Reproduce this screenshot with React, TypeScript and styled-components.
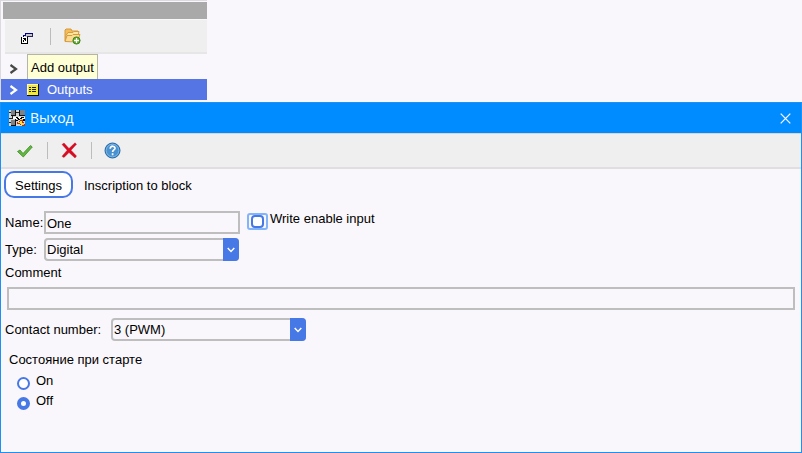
import React, { useState } from "react";
import styled, { createGlobalStyle } from "styled-components";

const accent = "#4678e6";
const line = "#bebebe";

const GlobalStyle = createGlobalStyle`
  * { box-sizing: border-box; }
  body {
    margin: 0;
    background: #f9f7fb;
    color: #000;
    font-family: "Liberation Sans", Arial, sans-serif;
    font-size: 13px;
    line-height: 16px;
  }
  button, input, select { font: inherit; color: inherit; }
`;

const Page = styled.div`
  display: flex;
  flex-direction: column;
  min-height: 100vh;
`;

const SidePanel = styled.aside`
  width: 207px;
  margin-bottom: 2px;
  border-top: 1px solid #dcdade;
  border-left: 1px solid #dcdade;
`;

const PanelHeader = styled.div`
  height: 17px;
  margin: 1px 0 1px 2px;
  background: #a9a9a9;
`;

const PanelTools = styled.div`
  display: flex;
  align-items: center;
  height: 34px;
  margin-left: 4px;
  padding-left: 10px;
  background: #efefef;
  border-bottom: 2px solid #e6e6e6;
`;

const ToolButton = styled.button<{ $width: number }>`
  display: grid;
  place-items: center;
  width: ${(p) => p.$width}px;
  height: 24px;
  padding: 0;
  border: 0;
  background: none;
`;

const Separator = styled.span<{ $gap: number }>`
  width: 1px;
  height: 17px;
  margin: 0 ${(p) => p.$gap}px;
  background: #bcbcbc;
`;

const TreeRow = styled.div<{ $selected?: boolean }>`
  display: flex;
  align-items: center;
  position: relative;
  height: ${(p) => (p.$selected ? 21 : 25)}px;
  padding-left: 8px;
  padding-top: ${(p) => (p.$selected ? 1 : 4)}px;
  color: ${(p) => (p.$selected ? "#fff" : "#484848")};
  background: ${(p) => (p.$selected ? "#5575e4" : "transparent")};
`;

const TreeIcon = styled.svg`
  margin: 0 8px 0 9px;
`;

const Tooltip = styled.div`
  position: absolute;
  top: 0;
  left: 26px;
  padding: 5px 3px 3px;
  color: #000;
  white-space: nowrap;
  background: #ffffd5;
  border: 1px solid #b4b4a8;
`;

const Dialog = styled.section`
  display: flex;
  flex: 1;
  flex-direction: column;
  border: 1px solid #1e90f4;
  border-top: 0;
`;

const TitleBar = styled.header`
  display: flex;
  align-items: center;
  height: 31px;
  padding: 0 8px;
  background: #008cff;
  border-top: 1px solid #1e90f4;
`;

const Title = styled.h1`
  flex: 1;
  margin: 0 0 0 5px;
  color: #fff;
  font: 400 14px/20px "Open Sans", "Noto Sans", sans-serif;
`;

const CloseButton = styled.button`
  display: grid;
  place-items: center;
  width: 15px;
  height: 20px;
  padding: 0;
  border: 0;
  background: none;
`;

const DialogTools = styled.div`
  display: flex;
  align-items: center;
  height: 36px;
  padding: 0 13px;
  background: #efefef;
  border-top: 1px solid #d9d5d2;
  border-bottom: 2px solid #e0dee0;
`;

const Tabs = styled.div`
  display: flex;
  gap: 9px;
  padding: 2px 3px 0;
`;

const Tab = styled.button<{ $active: boolean }>`
  height: 27px;
  padding: ${(p) => (p.$active ? "2px 9px 0" : "2px 0 0")};
  border: 2px solid ${(p) => (p.$active ? accent : "transparent")};
  border-radius: 10px;
  background: ${(p) => (p.$active ? "#fff" : "none")};
`;

const Form = styled.form`
  display: flex;
  flex-direction: column;
  gap: 4px;
  padding: 13px 6px 0 4px;
`;

const Row = styled.div`
  display: flex;
  align-items: center;
`;

const Label = styled.label<{ $width?: number }>`
  flex: none;
  width: ${(p) => (p.$width ? `${p.$width}px` : "auto")};
  padding-top: ${(p) => (p.$width ? 1 : 0)}px;
`;

const TextInput = styled.input<{ $wide?: boolean }>`
  width: ${(p) => (p.$wide ? "auto" : "196px")};
  height: 23px;
  margin-left: ${(p) => (p.$wide ? 2 : 0)}px;
  padding: 2px 1px 0;
  background: transparent;
  border: 2px solid ${line};
  outline: none;
`;

const SelectBox = styled.div`
  position: relative;
  width: 195px;
  height: 23px;
`;

const Select = styled.select`
  display: block;
  appearance: none;
  width: 100%;
  height: 100%;
  padding: 1px 18px 0 1px;
  border: 2px solid ${line};
  border-radius: 4px;
  background: transparent;
  outline: none;
`;

const SelectArrow = styled.span`
  position: absolute;
  inset: 0 0 0 auto;
  display: grid;
  place-items: center;
  width: 16px;
  border-radius: 0 4px 4px 0;
  background: ${accent};
  pointer-events: none;
`;

const CheckLabel = styled.label`
  display: flex;
  align-items: flex-start;
  gap: 2px;
  height: 23px;
  margin-left: 7px;
`;

const CheckFrame = styled.span`
  display: grid;
  place-items: center;
  width: 21px;
  height: 17px;
  margin-top: 2px;
  border: 2px solid #82b4fa;
  border-radius: 3px;
`;

const Checkbox = styled.input`
  appearance: none;
  width: 13px;
  height: 13px;
  margin: 0;
  border: 2px solid ${accent};
  border-radius: 4px;
  background: #fff;
  outline: none;
  &:checked { background: ${accent}; }
`;

const CommentField = styled.div`
  display: flex;
  flex-direction: column;
  gap: 6px;
  margin-bottom: 4px;
`;

const RadioGroup = styled.fieldset`
  margin: 7px 0 0;
  padding: 0 0 0 12px;
  border: 0;
`;

const Legend = styled.legend`
  margin: 0 0 5px -8px;
  padding: 0;
`;

const RadioLabel = styled.label`
  display: flex;
  align-items: flex-start;
  gap: 6px;
  width: max-content;
  height: 20px;
`;

const Radio = styled.input`
  appearance: none;
  width: 13px;
  height: 13px;
  margin: 4px 0 0;
  border: 2px solid ${accent};
  border-radius: 50%;
  background: #fff;
  outline: none;
  &:checked { border-width: 4px; }
`;

const TreeArrow = () => (
  <svg width="9" height="10" viewBox="0 0 9 10" fill="none" stroke="currentColor" strokeWidth="2.2">
    <path d="M1.5 1l5.500 4-5.500 4" />
  </svg>
);

const ShortcutIcon = () => (
  <svg width="14" height="17" viewBox="0 0 14 17" shapeRendering="crispEdges">
    <path d="M5 5h8v4H5z" fill="#c8c8cc" />
    <path d="M5 5h8v1H5zM3 7h3v1H3zM5 5h1v3H5zM3 7h1v2H3z" fill="#00008c" />
    <path d="M12 6h1v3H7V8h5z" fill="#24245a" />
    <path d="M1 9h7v7H1z" fill="#000" />
    <path d="M1 9h6v6H1z" fill="#fff" />
    <path d="M1 9h1v7H1zM3 10h3v3H5v-1H4v2H3v-2h1v-1H3z" fill="#000" />
  </svg>
);

const FolderIcon = () => (
  <svg width="17" height="17" viewBox="0 0 17 17">
    <path d="M1 13V2l1-1h5l1 2h6v5" fill="#f4bd57" stroke="#d5983c" />
    <path d="M2 12V7.500l2-3h5l1-1h5l-2 9z" fill="#ffe5a0" stroke="#d69b3b" />
    <path d="M1 13.500L3 7.500h5l1-1h7L13 14z" fill="#fdda94" stroke="#d69b3b" />
    <circle cx="12.500" cy="12.500" r="3.600" fill="#5da52c" stroke="#3f8817" />
    <path d="M10 12.500h5M12.500 10v5" stroke="#fff" strokeWidth="1.300" />
  </svg>
);

const BlockIcon = () => (
  <TreeIcon width="12" height="12" viewBox="0 0 12 12" shapeRendering="crispEdges">
    <path d="M0 0h12v12H0z" fill="#111" />
    <path d="M1 0h10v11H1z" fill="#f2e93a" />
    <path d="M0 0h1v11H0zM1 0h10v1H1z" fill="#fff8a8" />
    <path d="M2 3h2v1H2zM5 3h4v1H5zM2 5h2v1H2zM5 5h4v1H5zM2 7h2v1H2zM5 7h4v1H5z" fill="#222" />
  </TreeIcon>
);

const DialogIcon = () => (
  <svg width="16" height="16" viewBox="0 0 16 16" shapeRendering="crispEdges">
    <path d="M0 0h16v16H0z" fill="#d4d4d0" />
    <path d="M2 0h4v5H2zM11 0h5v5h-5zM2 10h4v5H2z" fill="#7c8288" />
    <path d="M2 5h5v1H2zM6 0h1v6H6zM10 0h1v6h-1zM10 5h6v1h-6zM2 15h5v1H2zM6 9h1v7H6z" fill="#111" />
    <path d="M0 2h2v1H0zM7 2h3v1H7zM0 12h2v1H0zM3 6h1v3H3zM0 8h4v1H0z" fill="#222" />
    <path d="M4 7h12v2H4z" fill="#fff" />
    <path d="M7 7h2v1H7zM8 8h2v1H8zM9 9h2v1H9zM7 10h2v1H7zM12 7h3v1h-3zM11 8h2v1h-2zM14 9h2v2h-2z" fill="#000" />
    <path d="M8 12h2v-1h1v-1h3v2h1v2h1v2h-3v-1h-2v-1H8z" fill="#b72b18" />
    <path d="M9 12h2v-1h2v2h1v2h-2v-1h-1v-1H9z" fill="#ffe13b" />
    <path d="M12 9h2v1h-2zM14 13h1v2h-1z" fill="#ffc22e" />
  </svg>
);

const CheckIcon = () => (
  <svg width="18" height="16" viewBox="0 0 18 16">
    <path d="M1.500 8.500l2.500-1.500 3 3.500 7.500-8 1.800 1.500L7.300 14z" fill="#62b83e" stroke="#398a25" strokeWidth=".8" strokeLinejoin="round" />
  </svg>
);

const CrossIcon = () => (
  <svg width="17" height="17" viewBox="0 0 17 17">
    <path d="M1 2.500l2-1.500 5 5.500L14 .8l1.500 1.400L10 8.200l5.500 5.800-1.500 2-6-5.500L3 15.500l-2-1.200L6.200 8.200z" fill="#dc0a20" stroke="#b01220" strokeWidth=".4" />
  </svg>
);

const HelpIcon = () => (
  <svg width="17" height="17" viewBox="0 0 17 17">
    <circle cx="8.500" cy="8.500" r="7.500" fill="#4a91d0" stroke="#2464a0" />
    <circle cx="8.500" cy="8.500" r="6.300" fill="none" stroke="#79b7e6" />
    <path d="M6.200 6.700c0-3.500 5-3 4.800-.3-.2 1.500-2.400 1.500-2.400 3.500M8.600 11.300v1.900" fill="none" stroke="#fff" strokeWidth="1.700" />
  </svg>
);

const CloseIcon = () => (
  <svg width="11" height="11" viewBox="0 0 11 11" stroke="#fff" strokeWidth="1.200">
    <path d="M.7.7l9.600 9.600M10.300.7L.7 10.300" />
  </svg>
);

type DropDownProps = { id: string; options: string[] };

const DropDown = ({ id, options }: DropDownProps) => (
  <SelectBox>
    <Select id={id}>
      {options.map((option) => (
        <option key={option}>{option}</option>
      ))}
    </Select>
    <SelectArrow>
      <svg width="8" height="6" viewBox="0 0 8 6" fill="none" stroke="#fff" strokeWidth="1.500">
        <path d="M.7 1L4 4.500 7.300 1" />
      </svg>
    </SelectArrow>
  </SelectBox>
);

export default function App() {
  const [tab, setTab] = useState("Settings");
  const [start, setStart] = useState("Off");

  return (
    <Page>
      <GlobalStyle />
      <SidePanel>
        <PanelHeader />
        <PanelTools>
          <ToolButton $width={24} aria-label="Create shortcut"><ShortcutIcon /></ToolButton>
          <Separator $gap={11} />
          <ToolButton $width={20} aria-label="Add output"><FolderIcon /></ToolButton>
        </PanelTools>
        <TreeRow>
          <TreeArrow />
          <Tooltip role="tooltip">Add output</Tooltip>
        </TreeRow>
        <TreeRow $selected>
          <TreeArrow />
          <BlockIcon />
          Outputs
        </TreeRow>
      </SidePanel>

      <Dialog role="dialog" aria-labelledby="dialog-title">
        <TitleBar>
          <DialogIcon />
          <Title id="dialog-title">Выход</Title>
          <CloseButton aria-label="Close"><CloseIcon /></CloseButton>
        </TitleBar>
        <DialogTools>
          <ToolButton $width={22} aria-label="Apply"><CheckIcon /></ToolButton>
          <Separator $gap={11} />
          <ToolButton $width={20} aria-label="Cancel"><CrossIcon /></ToolButton>
          <Separator $gap={12} />
          <ToolButton $width={16} aria-label="Help"><HelpIcon /></ToolButton>
        </DialogTools>
        <Tabs role="tablist">
          {["Settings", "Inscription to block"].map((name) => (
            <Tab key={name} type="button" role="tab" aria-selected={tab === name} $active={tab === name} onClick={() => setTab(name)}>
              {name}
            </Tab>
          ))}
        </Tabs>
        <Form>
          <Row>
            <Label htmlFor="name" $width={39}>Name:</Label>
            <TextInput id="name" defaultValue="One" />
            <CheckLabel>
              <CheckFrame><Checkbox type="checkbox" /></CheckFrame>
              Write enable input
            </CheckLabel>
          </Row>
          <Row>
            <Label htmlFor="type" $width={39}>Type:</Label>
            <DropDown id="type" options={["Digital", "Analog"]} />
          </Row>
          <CommentField>
            <Label htmlFor="comment">Comment</Label>
            <TextInput id="comment" $wide />
          </CommentField>
          <Row>
            <Label htmlFor="contact" $width={106}>Contact number:</Label>
            <DropDown id="contact" options={["3 (PWM)", "5 (PWM)"]} />
          </Row>
          <RadioGroup>
            <Legend>Состояние при старте</Legend>
            {["On", "Off"].map((value) => (
              <RadioLabel key={value}>
                <Radio type="radio" name="start" checked={start === value} onChange={() => setStart(value)} />
                {value}
              </RadioLabel>
            ))}
          </RadioGroup>
        </Form>
      </Dialog>
    </Page>
  );
}
